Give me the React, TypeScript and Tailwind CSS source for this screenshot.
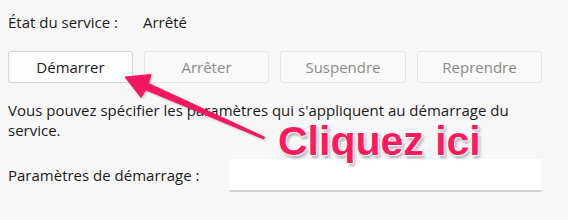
import React from "react";

export default function App() {
  const font = { fontFamily: '"Open Sans", "Noto Sans", Arial, sans-serif' };
  return (
    <div className="relative w-[568px] h-[220px] bg-[#f7f7f7] overflow-hidden text-[#1b1b1b]" style={font}>
      <div className="flex flex-col px-2 pt-[12px]">
        <div className="flex items-center h-[20px] text-[15px]">
          <span className="w-[135px]">État du service :</span>
          <span>Arrêté</span>
        </div>
        <div className="flex gap-[11px] mt-[19px]">
          <button className="w-[125px] h-[32px] rounded-[3px] border border-[#d4d4d4] bg-[#fdfdfd] text-[15px] text-[#1b1b1b]">Démarrer</button>
          <button className="w-[125px] h-[32px] rounded-[3px] border border-[#e6e6e6] bg-[#f9f9f9] text-[15px] text-[#8a8a8a]">Arrêter</button>
          <button className="w-[126px] h-[32px] rounded-[3px] border border-[#e6e6e6] bg-[#f9f9f9] text-[15px] text-[#8a8a8a]">Suspendre</button>
          <button className="w-[125px] h-[32px] rounded-[3px] border border-[#e6e6e6] bg-[#f9f9f9] text-[15px] text-[#8a8a8a]">Reprendre</button>
        </div>
        <p className="mt-[17px] text-[15px] leading-[20px] w-[515px]">
          Vous pouvez spécifier les paramètres qui s'appliquent au démarrage du service.
        </p>
        <div className="flex items-center mt-[19px]">
          <span className="w-[221px] text-[15px]">Paramètres de démarrage :</span>
          <div className="w-[313px] h-[33px] bg-white border-b-2 border-[#cfcfcf] rounded-[2px]" />
        </div>
      </div>
      <svg
        className="absolute left-0 top-0 drop-shadow-[1px_1px_1px_rgba(0,0,0,0.25)]"
        width="568"
        height="220"
        viewBox="0 0 568 220"
      >
        <polygon
          points="125,77 151,74.5 148.4,83.4 264.4,137.1 263.6,138.9 145.6,89.8 141,97.5"
          fill="#f2175f"
          stroke="#f2175f"
          strokeWidth="1"
          strokeLinejoin="round"
        />
      </svg>
      <div
        className="absolute left-[278px] top-[117px] text-[41px] font-bold leading-[48px] text-[#fe1a5c]"
        style={{ fontFamily: '"Liberation Sans", Arial, sans-serif', textShadow: "0 0 2px #fff, 0 0 2px #fff, 1px 1px 2px #fff, 2px 3px 3px rgba(0,0,0,0.35)" }}
      >
        Cliquez ici
      </div>
    </div>
  );
}
